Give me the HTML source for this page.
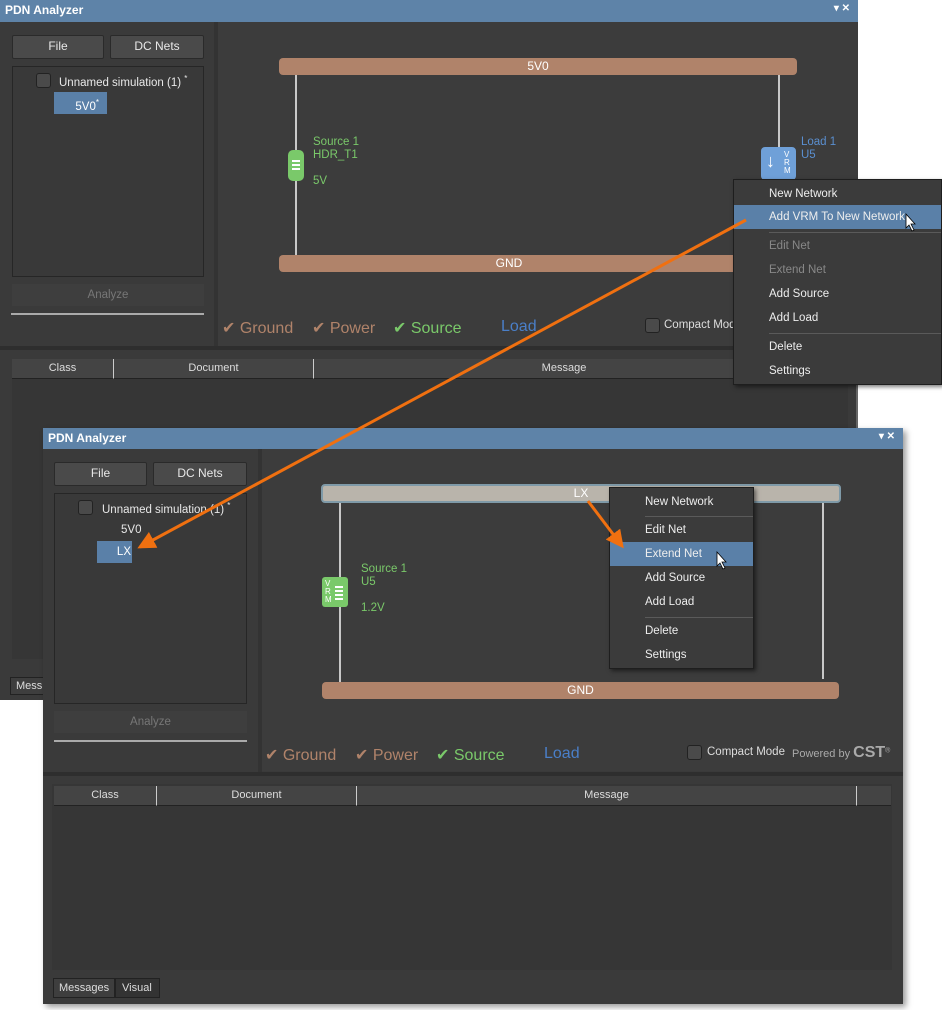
<!DOCTYPE html>
<html><head><style>
body{margin:0;width:942px;height:1010px;background:#fff;position:relative;overflow:hidden;font-family:"Liberation Sans",sans-serif;}
.a{position:absolute;box-sizing:border-box}
.t{color:#fff;font-weight:bold;font-size:12px;background:#5e83a8;}
.btn{background:#4a4a4a;border:1px solid #2a2a2a;border-radius:2px;color:#e8e8e8;font-size:12px;text-align:center;line-height:21px}
.box{background:#393939;border:1px solid #262626}
.bar{background:#b0836a;border-radius:4px;color:#fff;font-size:12px;text-align:center}
.vl{background:#c8c8c8;width:2px}
.leg{font-size:16px}
.menu{background:#3b3b3b;border:1px solid #1e1e1e;box-shadow:2px 2px 4px rgba(0,0,0,.5);color:#eee;font-size:11.5px}
.menu div{position:absolute;left:0;right:0;height:24px;line-height:24px}
.sep{height:1px!important;background:#5a5a5a;left:35px!important}
.hd{background:#444;border-bottom:1px solid #222;color:#ddd;font-size:11px;text-align:center;line-height:19px}
.ln{position:absolute;height:2px;background:#fff}
</style></head><body>
<!-- window 1 -->
<div class="a" style="left:0;top:0;width:858px;height:700px;background:#3a3a3a;border-right:2px solid #666"></div>
<div class="a t" style="left:0;top:0;width:858px;height:22px;padding:3px 5px">PDN Analyzer<span style="position:absolute;right:8px;top:3px;font-size:10px">▾ ✕</span></div>
<div class="a" style="left:214px;top:22px;width:4px;height:326px;background:#333"></div>
<div class="a" style="left:218px;top:22px;width:640px;height:324px;background:#3c3c3c"></div>
<div class="a btn" style="left:12px;top:35px;width:92px;height:24px">File</div>
<div class="a btn" style="left:110px;top:35px;width:94px;height:24px">DC Nets</div>
<div class="a box" style="left:12px;top:66px;width:192px;height:211px"></div>
<div class="a" style="left:36px;top:73px;width:15px;height:15px;border:1px solid #222;background:#4a4a4a;border-radius:3px"></div>
<div class="a" style="left:59px;top:74px;color:#e8e8e8;font-size:11.5px">Unnamed simulation (1) <sup style="font-size:8px">*</sup></div>
<div class="a" style="left:54px;top:92px;width:53px;height:22px;background:#5a80a8;color:#fff;font-size:11.5px;line-height:22px;text-align:right;padding-right:8px">5V0<sup style="font-size:8px">*</sup></div>
<div class="a" style="left:12px;top:284px;width:192px;height:22px;background:#3e3e3e;color:#777;font-size:11.5px;text-align:center;line-height:22px">Analyze</div>
<div class="a" style="left:11px;top:313px;width:193px;height:2px;background:#aaa"></div>
<div class="a" style="left:0;top:346px;width:858px;height:4px;background:#2e2e2e"></div>
<div class="a bar" style="left:279px;top:58px;width:518px;height:17px;line-height:17px">5V0</div>
<div class="a bar" style="left:279px;top:255px;width:460px;height:17px;line-height:17px">GND</div>
<div class="a vl" style="left:295px;top:75px;height:180px"></div>
<div class="a vl" style="left:778px;top:75px;height:75px"></div>
<div class="a" style="left:288px;top:150px;width:16px;height:31px;background:#7ac96a;border-radius:5px"><div class="ln" style="left:4px;top:10px;width:8px"></div><div class="ln" style="left:4px;top:14px;width:8px"></div><div class="ln" style="left:4px;top:18px;width:8px"></div></div>
<div class="a" style="left:313px;top:136px;color:#7ac96a;font-size:11.5px;line-height:13px">Source 1<br>HDR_T1<br><br style="line-height:8px">5V</div>
<div class="a" style="left:761px;top:147px;width:35px;height:33px;background:#6fa0d8;border-radius:4px;color:#fff;font-size:18px;padding:4px 0 0 5px">↓<span style="position:absolute;left:23px;top:4px;font-size:8px;line-height:8px">V<br>R<br>M</span></div>
<div class="a" style="left:801px;top:136px;color:#5a8fd0;font-size:11.5px;line-height:13px">Load 1<br>U5</div>
<div class="a leg" style="left:222px;top:318px;color:#b0836a">✔ Ground</div>
<div class="a leg" style="left:312px;top:318px;color:#b0836a">✔ Power</div>
<div class="a leg" style="left:393px;top:318px;color:#7ac96a">✔ Source</div>
<div class="a leg" style="left:501px;top:318px;color:#4a7fc8">Load</div>
<div class="a" style="left:645px;top:318px;width:15px;height:15px;border:1px solid #222;background:#4a4a4a;border-radius:3px"></div>
<div class="a" style="left:664px;top:319px;color:#ddd;font-size:11.5px">Compact Mode</div>
<div class="a" style="left:12px;top:359px;width:836px;height:300px;background:#363636"></div>
<div class="a hd" style="left:12px;top:359px;width:836px;height:20px"></div>
<div class="a hd" style="left:12px;top:359px;width:102px;height:20px;border-right:1px solid #ccc">Class</div>
<div class="a hd" style="left:114px;top:359px;width:200px;height:20px;border-right:1px solid #ccc">Document</div>
<div class="a hd" style="left:314px;top:359px;width:500px;height:20px">Message</div>
<div class="a" style="left:10px;top:677px;width:40px;height:18px;background:#3e3e3e;border:1px solid #222;color:#ddd;font-size:11px;padding:2px 5px">Mess</div>
<!-- menu 1 -->
<div class="a menu" style="left:733px;top:179px;width:209px;height:206px">
<div style="top:2px;padding-left:35px">New Network</div>
<div style="top:25px;background:#5a80a8;padding-left:35px">Add VRM To New Network</div>
<div class="sep" style="top:52px"></div>
<div style="top:54px;padding-left:35px;color:#888">Edit Net</div>
<div style="top:78px;padding-left:35px;color:#888">Extend Net</div>
<div style="top:102px;padding-left:35px">Add Source</div>
<div style="top:126px;padding-left:35px">Add Load</div>
<div class="sep" style="top:153px"></div>
<div style="top:155px;padding-left:35px">Delete</div>
<div style="top:179px;padding-left:35px">Settings</div>
</div>
<!-- window 2 -->
<div class="a" style="left:43px;top:428px;width:860px;height:576px;background:#3a3a3a;box-shadow:3px 3px 6px rgba(0,0,0,.4)"></div>
<div class="a t" style="left:43px;top:428px;width:860px;height:21px;padding:3px 5px">PDN Analyzer<span style="position:absolute;right:8px;top:3px;font-size:10px">▾ ✕</span></div>
<div class="a" style="left:258px;top:449px;width:4px;height:323px;background:#333"></div>
<div class="a" style="left:262px;top:449px;width:640px;height:322px;background:#3c3c3c"></div>
<div class="a btn" style="left:54px;top:462px;width:93px;height:24px">File</div>
<div class="a btn" style="left:153px;top:462px;width:94px;height:24px">DC Nets</div>
<div class="a box" style="left:54px;top:493px;width:193px;height:211px"></div>
<div class="a" style="left:78px;top:500px;width:15px;height:15px;border:1px solid #222;background:#4a4a4a;border-radius:3px"></div>
<div class="a" style="left:102px;top:501px;color:#e8e8e8;font-size:11.5px">Unnamed simulation (1) <sup style="font-size:8px">*</sup></div>
<div class="a" style="left:121px;top:524px;color:#e8e8e8;font-size:11.5px">5V0</div>
<div class="a" style="left:97px;top:541px;width:35px;height:22px;background:#5a80a8;color:#fff;font-size:11.5px;line-height:22px;text-align:right;padding-right:1px">LX</div>
<div class="a" style="left:54px;top:711px;width:193px;height:22px;background:#3e3e3e;color:#777;font-size:11.5px;text-align:center;line-height:22px">Analyze</div>
<div class="a" style="left:54px;top:740px;width:193px;height:2px;background:#aaa"></div>
<div class="a" style="left:43px;top:772px;width:860px;height:4px;background:#2e2e2e"></div>
<div class="a" style="left:321px;top:484px;width:520px;height:19px;background:#b9b4ab;border:2px solid #7f9aa8;border-radius:4px;color:#fff;font-size:12px;text-align:center;line-height:15px">LX</div>
<div class="a bar" style="left:322px;top:682px;width:517px;height:17px;line-height:17px">GND</div>
<div class="a vl" style="left:339px;top:503px;height:179px"></div>
<div class="a vl" style="left:822px;top:503px;height:176px"></div>
<div class="a" style="left:322px;top:577px;width:26px;height:30px;background:#7ac96a;border-radius:3px;color:#fff;font-size:8px;line-height:8px;padding:3px 0 0 3px">V<br>R<br>M<div class="ln" style="left:13px;top:9px;width:8px"></div><div class="ln" style="left:13px;top:13px;width:8px"></div><div class="ln" style="left:13px;top:17px;width:8px"></div><div class="ln" style="left:13px;top:21px;width:8px"></div></div>
<div class="a" style="left:361px;top:563px;color:#7ac96a;font-size:11.5px;line-height:13px">Source 1<br>U5<br><br style="line-height:8px">1.2V</div>
<div class="a leg" style="left:265px;top:745px;color:#b0836a">✔ Ground</div>
<div class="a leg" style="left:355px;top:745px;color:#b0836a">✔ Power</div>
<div class="a leg" style="left:436px;top:745px;color:#7ac96a">✔ Source</div>
<div class="a leg" style="left:544px;top:745px;color:#4a7fc8">Load</div>
<div class="a" style="left:687px;top:745px;width:15px;height:15px;border:1px solid #222;background:#4a4a4a;border-radius:3px"></div>
<div class="a" style="left:707px;top:746px;color:#ddd;font-size:11.5px">Compact Mode</div>
<div class="a" style="left:792px;top:744px;color:#aaa;font-size:11px">Powered by <span style="font-size:16px;font-weight:bold">CST</span><sup style="font-size:7px">®</sup></div>
<div class="a" style="left:52px;top:784px;width:840px;height:186px;background:#363636"></div>
<div class="a hd" style="left:54px;top:786px;width:837px;height:20px"></div>
<div class="a hd" style="left:54px;top:786px;width:103px;height:20px;border-right:1px solid #ccc">Class</div>
<div class="a hd" style="left:157px;top:786px;width:200px;height:20px;border-right:1px solid #ccc">Document</div>
<div class="a hd" style="left:357px;top:786px;width:500px;height:20px;border-right:1px solid #ccc">Message</div>
<div class="a" style="left:53px;top:978px;width:62px;height:20px;background:#3e3e3e;border:1px solid #222;color:#ddd;font-size:11px;padding:3px 5px">Messages</div>
<div class="a" style="left:115px;top:978px;width:45px;height:20px;background:#333;border:1px solid #222;color:#ddd;font-size:11px;padding:3px 6px">Visual</div>
<!-- menu 2 -->
<div class="a menu" style="left:609px;top:487px;width:145px;height:182px">
<div style="top:2px;padding-left:35px">New Network</div>
<div class="sep" style="top:28px"></div>
<div style="top:30px;padding-left:35px">Edit Net</div>
<div style="top:54px;background:#5a80a8;padding-left:35px">Extend Net</div>
<div style="top:78px;padding-left:35px">Add Source</div>
<div style="top:102px;padding-left:35px">Add Load</div>
<div class="sep" style="top:129px"></div>
<div style="top:131px;padding-left:35px">Delete</div>
<div style="top:155px;padding-left:35px">Settings</div>
</div>
<svg class="a" style="left:0;top:0" width="942" height="1010">
<defs><marker id="m" markerWidth="6" markerHeight="6" refX="5" refY="3" orient="auto"><path d="M0,0L6,3L0,6z" fill="#f07010"/></marker></defs>
<line x1="746" y1="220" x2="140" y2="547" stroke="#f07010" stroke-width="3" marker-end="url(#m)"/>
<line x1="588" y1="501" x2="622" y2="546" stroke="#f07010" stroke-width="3" marker-end="url(#m)"/>
<path d="M906,214l0,14l3,-3l3,6l2,-1l-3,-6l4,0z" fill="#fff" stroke="#000" stroke-width=".8"/>
<path d="M717,552l0,14l3,-3l3,6l2,-1l-3,-6l4,0z" fill="#fff" stroke="#000" stroke-width=".8"/>
</svg>
</body></html>
